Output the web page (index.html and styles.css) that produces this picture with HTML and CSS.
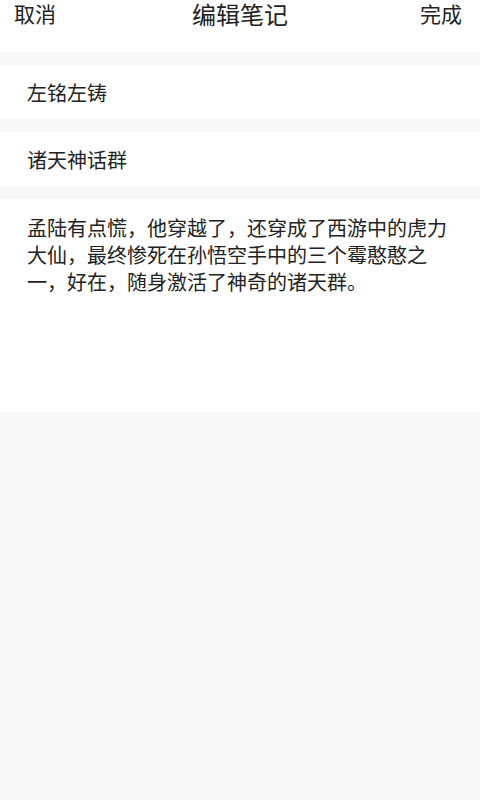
FILE: index.html
```html
<!DOCTYPE html>
<html lang="zh">
<head>
<meta charset="utf-8">
<link rel="stylesheet" href="styles.css">
</head>
<body>
<div class="page">
  <header class="header">
    <span class="btn">取消</span>
    <span class="title">编辑笔记</span>
    <span class="btn">完成</span>
  </header>
  <div class="gap"></div>
  <div class="row">左铭左铸</div>
  <div class="gap"></div>
  <div class="row">诸天神话群</div>
  <div class="gap"></div>
  <div class="content">孟陆有点慌，他穿越了，还穿成了西游中的虎力大仙，最终惨死在孙悟空手中的三个霉憨憨之一，好在，随身激活了神奇的诸天群。</div>
</div>
</body>
</html>
```
FILE: styles.css
```css
html, body {
  margin: 0;
  padding: 0;
  background: #f8f8f8;
}
body {
  font-family: "Noto Sans CJK SC", "Noto Sans", sans-serif;
  color: #222;
}
.page {
  width: 480px;
  height: 800px;
  background: #f8f8f8;
}
.header {
  height: 52px;
  box-sizing: border-box;
  background: #fff;
  display: flex;
  justify-content: space-between;
  align-items: flex-start;
  padding: 2px 18px 0 14px;
}
.btn {
  font-size: 21px;
  line-height: 22px;
}
.title {
  font-size: 24px;
  line-height: 24px;
  margin-left: 4px;
}
.gap {
  height: 13px;
}
.row {
  height: 54px;
  background: #fff;
  display: flex;
  align-items: center;
  padding-left: 27px;
  font-size: 20px;
}
.content {
  background: #fff;
  height: 213px;
  box-sizing: border-box;
  padding: 15px 27px 0 27px;
  font-size: 20px;
  line-height: 27px;
}
```
